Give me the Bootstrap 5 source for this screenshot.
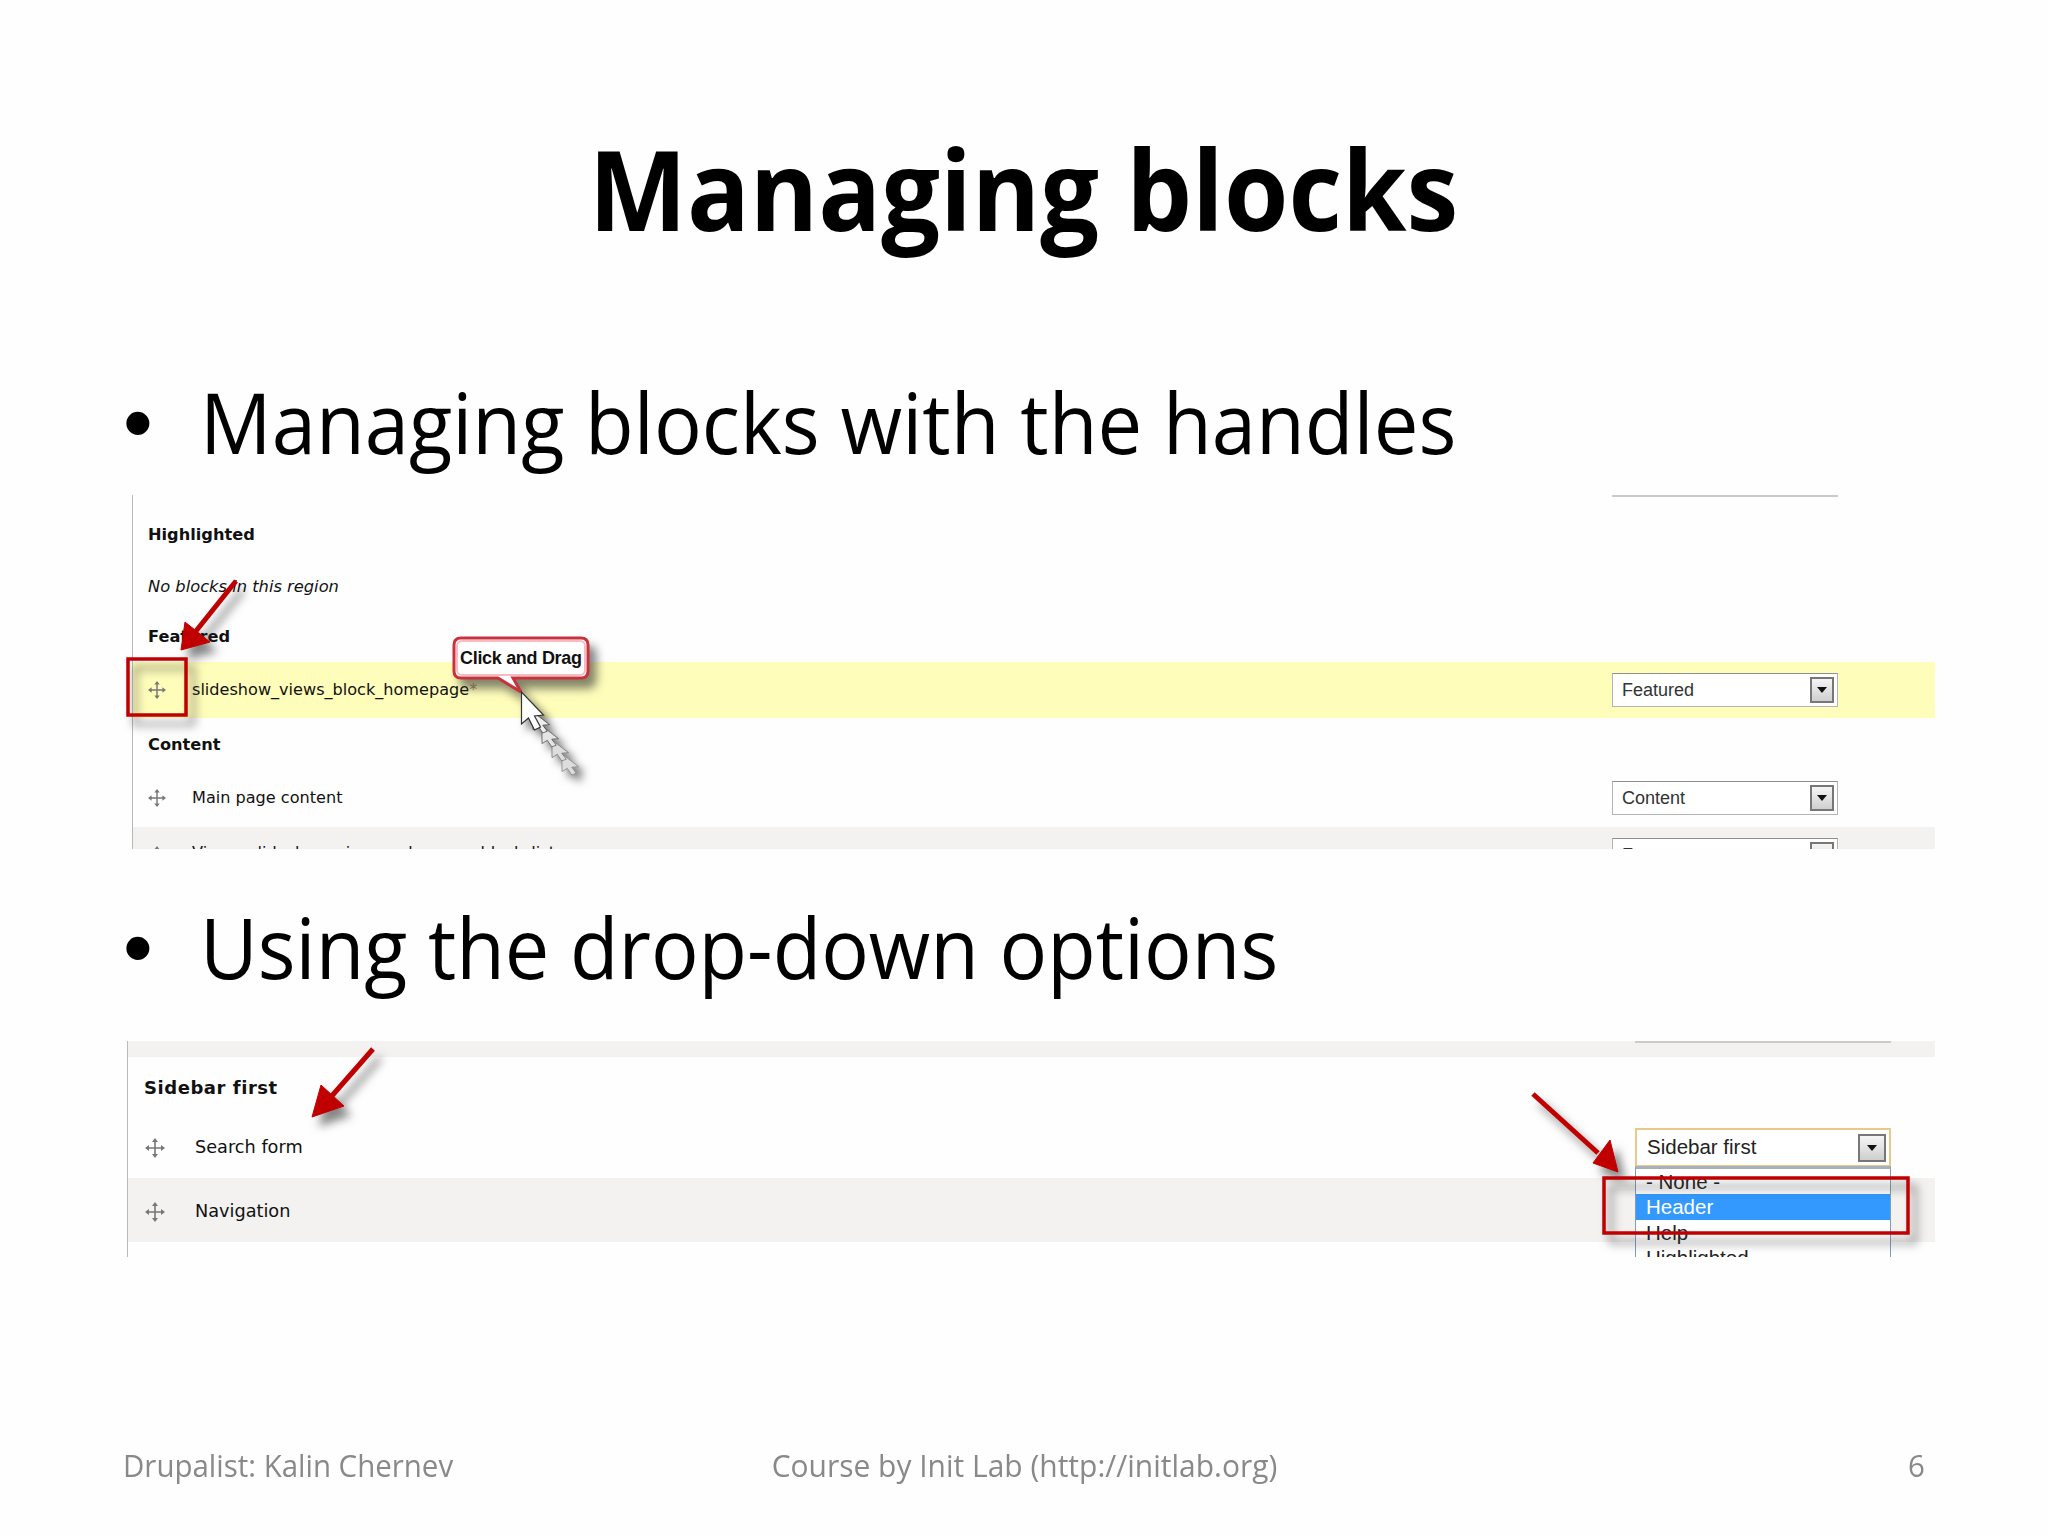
<!DOCTYPE html>
<html lang="en">
<head>
<meta charset="utf-8">
<title>Managing blocks</title>
<link rel="stylesheet" href="https://cdn.jsdelivr.net/npm/bootstrap@5.3.0/dist/css/bootstrap.min.css">
<style>
html,body{margin:0;background:#fefefe;}
.deck{width:2048px;height:1536px;overflow:hidden;position:relative;background:#fefefe;font-family:"Open Sans",sans-serif;color:#000;}
.deck-title{height:374px;padding-top:108px;line-height:160px;font-size:112px;margin:0;text-align:center;font-weight:700;color:#000;}
.deck-title span{display:inline-block;transform:scaleX(.93);transform-origin:center;white-space:nowrap;}
.point{height:100px;padding-left:123px;line-height:94px;font-size:85px;white-space:nowrap;}
.point-a{margin-top:0;}
.point-b{margin-top:50px;}
.dot{width:77px;flex:none;font-family:"Liberation Sans",sans-serif;line-height:98px;}
.point-text{display:inline-block;transform:scaleX(.937);transform-origin:left center;}
.point-b .point-text{transform:scaleX(.933);}
.shot{position:relative;overflow:hidden;font-family:"DejaVu Sans",sans-serif;color:#111;border-left:1px solid #b9b9b9;}
.shot-a{margin:21px 113px 0 132px;height:354px;font-size:16.1px;}
.shot-b{margin:42px 113px 0 127px;height:216px;font-size:17.7px;}
.strip{display:flex;align-items:center;padding-left:15px;}
.h20{height:20px;}.h40{height:40px;}.h64{height:64px;}.h36{height:36px;margin-bottom:7px;}
.h56{height:56px;}.h54{height:54px;}.h55{height:55px;padding-bottom:3px;}.h22{height:22px;}
.h16{height:16px;}.h60{height:60px;}.h61{height:61px;}.h64n{height:64px;padding-top:3px;}
.tone-y{background:#fefdb9;}
.tone-g{background:#f3f2f0;}
.hdr{font-weight:700;color:#111;}
.shot-a .hdr{font-size:16.2px;}
.shot-b .hdr{font-size:18px;letter-spacing:.55px;}
.shot-b .strip{padding-left:16px;}
.shot-b .grip{margin-left:1px;}
.grip{flex:none;width:18px;height:18px;color:#777;}
.shot-a .grip{margin-right:26px;}
.shot-b .grip{width:20px;height:20px;margin-right:30px;}
.note{font-style:italic;font-size:16.3px;}
.star{color:#b08a6a;}
.frag{margin-left:auto;height:2px;background:#cbcbcb;align-self:flex-start;}
.shot-a .frag{width:226px;margin-right:97px;height:1.5px;}
.shot-b .frag{width:256px;margin-right:44px;}
.pick{margin-left:auto;position:relative;background:#fff;font-family:"Liberation Sans",sans-serif;color:#333;display:flex;align-items:center;flex:none;}
.shot-a .pick{width:226px;height:34px;margin-right:97px;border:1px solid #b4b4b4;border-top-color:#8f8f8f;font-size:18px;padding-left:9px;}
.shot-b .pick{width:256px;height:39px;margin-right:44px;border:2px solid #e8c98a;font-size:20.5px;padding-left:10px;color:#222;}
.pick-btn{position:absolute;top:3px;right:3px;bottom:3px;border:2px solid #777;background:linear-gradient(#f5f5f5,#cfcfcf);display:flex;align-items:center;justify-content:center;}
.shot-a .pick-btn{width:24px;}
.shot-b .pick-btn{width:28px;top:4px;bottom:3px;}
.pick-btn i{display:block;width:0;height:0;border:5px solid transparent;border-top:6px solid #111;border-bottom:0;}
.clip-top{align-self:flex-start;margin-top:11px;height:34px;}
.clip-text{align-self:flex-start;margin-top:14px;white-space:nowrap;}
.opts{position:absolute;left:-2px;top:35.5px;width:256px;background:#fff;border:1px solid #7f9db9;border-top:3px solid #a8b0b8;font-size:20.5px;line-height:25.5px;color:#222;}
.opts div{padding-left:10px;height:25.5px;}
.opts .sel{background:#3399ff;color:#fff;}
.foot{margin:188px 0 0;padding:0 123px;line-height:40px;font-size:31px;color:#898989;}
.foot span{display:inline-block;white-space:nowrap;transform:scaleX(.95);}
.foot .l{transform-origin:left center;}
.foot .c{transform-origin:center;transform:scaleX(.967);}
.foot .r{transform-origin:right center;}
.marks{position:absolute;left:0;top:0;width:2048px;height:1536px;pointer-events:none;}
.sh{filter:drop-shadow(7px 9px 5px rgba(50,50,50,.6));}
.sh-deep{filter:drop-shadow(6px 6px 4px rgba(50,50,50,.7));}
.callout-text{font-family:"Liberation Sans",sans-serif;font-weight:700;font-size:18px;fill:#111;}
.defs-holder{position:absolute;}
</style>
</head>
<body>
<svg width="0" height="0" class="defs-holder"><defs>
<symbol id="gripper" viewBox="0 0 20 20"><path d="M10 3v14M3 10h14" stroke="currentColor" stroke-width="1.6" fill="none"/><path d="M10 0l3 4H7zM10 20l3-4H7zM0 10l4-3v6zM20 10l-4-3v6z" fill="currentColor"/></symbol>
</defs></svg>
<div class="deck">
  <h1 class="deck-title"><span>Managing blocks</span></h1>

  <div class="point point-a d-flex"><span class="dot">•</span><span class="point-text">Managing blocks with the handles</span></div>

  <div class="shot shot-a">
    <div class="strip h20"><div class="frag"></div></div>
    <div class="strip h40 hdr">Highlighted</div>
    <div class="strip h64 note">No blocks in this region</div>
    <div class="strip h36 hdr">Featured</div>
    <div class="strip h56 tone-y">
      <svg class="grip"><use href="#gripper"/></svg>
      <span>slideshow_views_block_homepage<span class="star">*</span></span>
      <div class="pick">Featured<div class="pick-btn"><i></i></div></div>
    </div>
    <div class="strip h54 hdr">Content</div>
    <div class="strip h55">
      <svg class="grip"><use href="#gripper"/></svg>
      <span>Main page content</span>
      <div class="pick">Content<div class="pick-btn"><i></i></div></div>
    </div>
    <div class="strip h22 tone-g">
      <svg class="grip clip-top"><use href="#gripper"/></svg>
      <span class="clip-text">Views: slideshow_views_sub_menu_block_list</span>
      <div class="pick clip-top">Footer<div class="pick-btn"><i></i></div></div>
    </div>
  </div>

  <div class="point point-b d-flex"><span class="dot">•</span><span class="point-text">Using the drop-down options</span></div>

  <div class="shot shot-b">
    <div class="strip h16 tone-g"><div class="frag"></div></div>
    <div class="strip h60 hdr">Sidebar first</div>
    <div class="strip h61">
      <svg class="grip"><use href="#gripper"/></svg>
      <span>Search form</span>
      <div class="pick">Sidebar first<div class="pick-btn"><i></i></div>
        <div class="opts"><div>- None -</div><div class="sel">Header</div><div>Help</div><div>Highlighted</div></div>
      </div>
    </div>
    <div class="strip h64n tone-g">
      <svg class="grip"><use href="#gripper"/></svg>
      <span>Navigation</span>
    </div>
  </div>

  <div class="row g-0 foot">
    <div class="col-4 text-start"><span class="l">Drupalist: Kalin Chernev</span></div>
    <div class="col-4 text-center"><span class="c">Course by Init Lab (http://initlab.org)</span></div>
    <div class="col-4 text-end"><span class="r">6</span></div>
  </div>

  <svg class="marks" viewBox="0 0 2048 1536">
    <defs>
      <path id="ptr" d="M0 0V32L7 26L13 38L19 35L13 24L22 23Z"/>
    </defs>
    <g class="sh" fill="#c00000" stroke="#c00000">
      <path d="M236 581L192 636" stroke-width="5" fill="none"/>
      <path d="M181 650L185 622L210 642Z" stroke-width="1"/>
      <path d="M373 1049L330 1098" stroke-width="5" fill="none"/>
      <path d="M312 1117L321 1085L344 1106Z" stroke-width="1"/>
      <path d="M1533 1094L1598 1153" stroke-width="5" fill="none"/>
      <path d="M1618 1172L1593 1163 L1610 1140Z" stroke-width="1"/>
    </g>
    <g class="sh" fill="none" stroke="#c00000" stroke-width="3.5">
      <rect x="128" y="659" width="58" height="56"/>
      <rect x="1604" y="1178" width="304" height="55"/>
    </g>
    <g class="sh">
      <path d="M461 638H581Q588 638 588 645V671Q588 678 581 678H513L521 692L498 678H461Q454 678 454 671V645Q454 638 461 638Z" fill="#fff" stroke="#c8323c" stroke-width="3"/>
    </g>
    <rect x="457" y="641" width="128" height="34" rx="5" fill="none" stroke="#f8bcc0" stroke-width="2"/>
    <text class="callout-text" x="460" y="664" textLength="122">Click and Drag</text>
    <g class="sh-deep" stroke="#333" stroke-width="1.2">
      <use href="#ptr" transform="translate(562 754) scale(.75 .55)" fill="#ddd" stroke="#888"/>
      <use href="#ptr" transform="translate(552 740) scale(.75 .55)" fill="#ddd" stroke="#777"/>
      <use href="#ptr" transform="translate(542 726) scale(.75 .55)" fill="#e4e4e4" stroke="#555"/>
      <use href="#ptr" transform="translate(533 712) scale(.75 .55)" fill="#eee" stroke="#444"/>
      <use href="#ptr" transform="translate(521.5 692)" fill="#fff"/>
    </g>
  </svg>
</div>
<script src="https://cdn.jsdelivr.net/npm/bootstrap@5.3.0/dist/js/bootstrap.bundle.min.js"></script>
</body>
</html>
